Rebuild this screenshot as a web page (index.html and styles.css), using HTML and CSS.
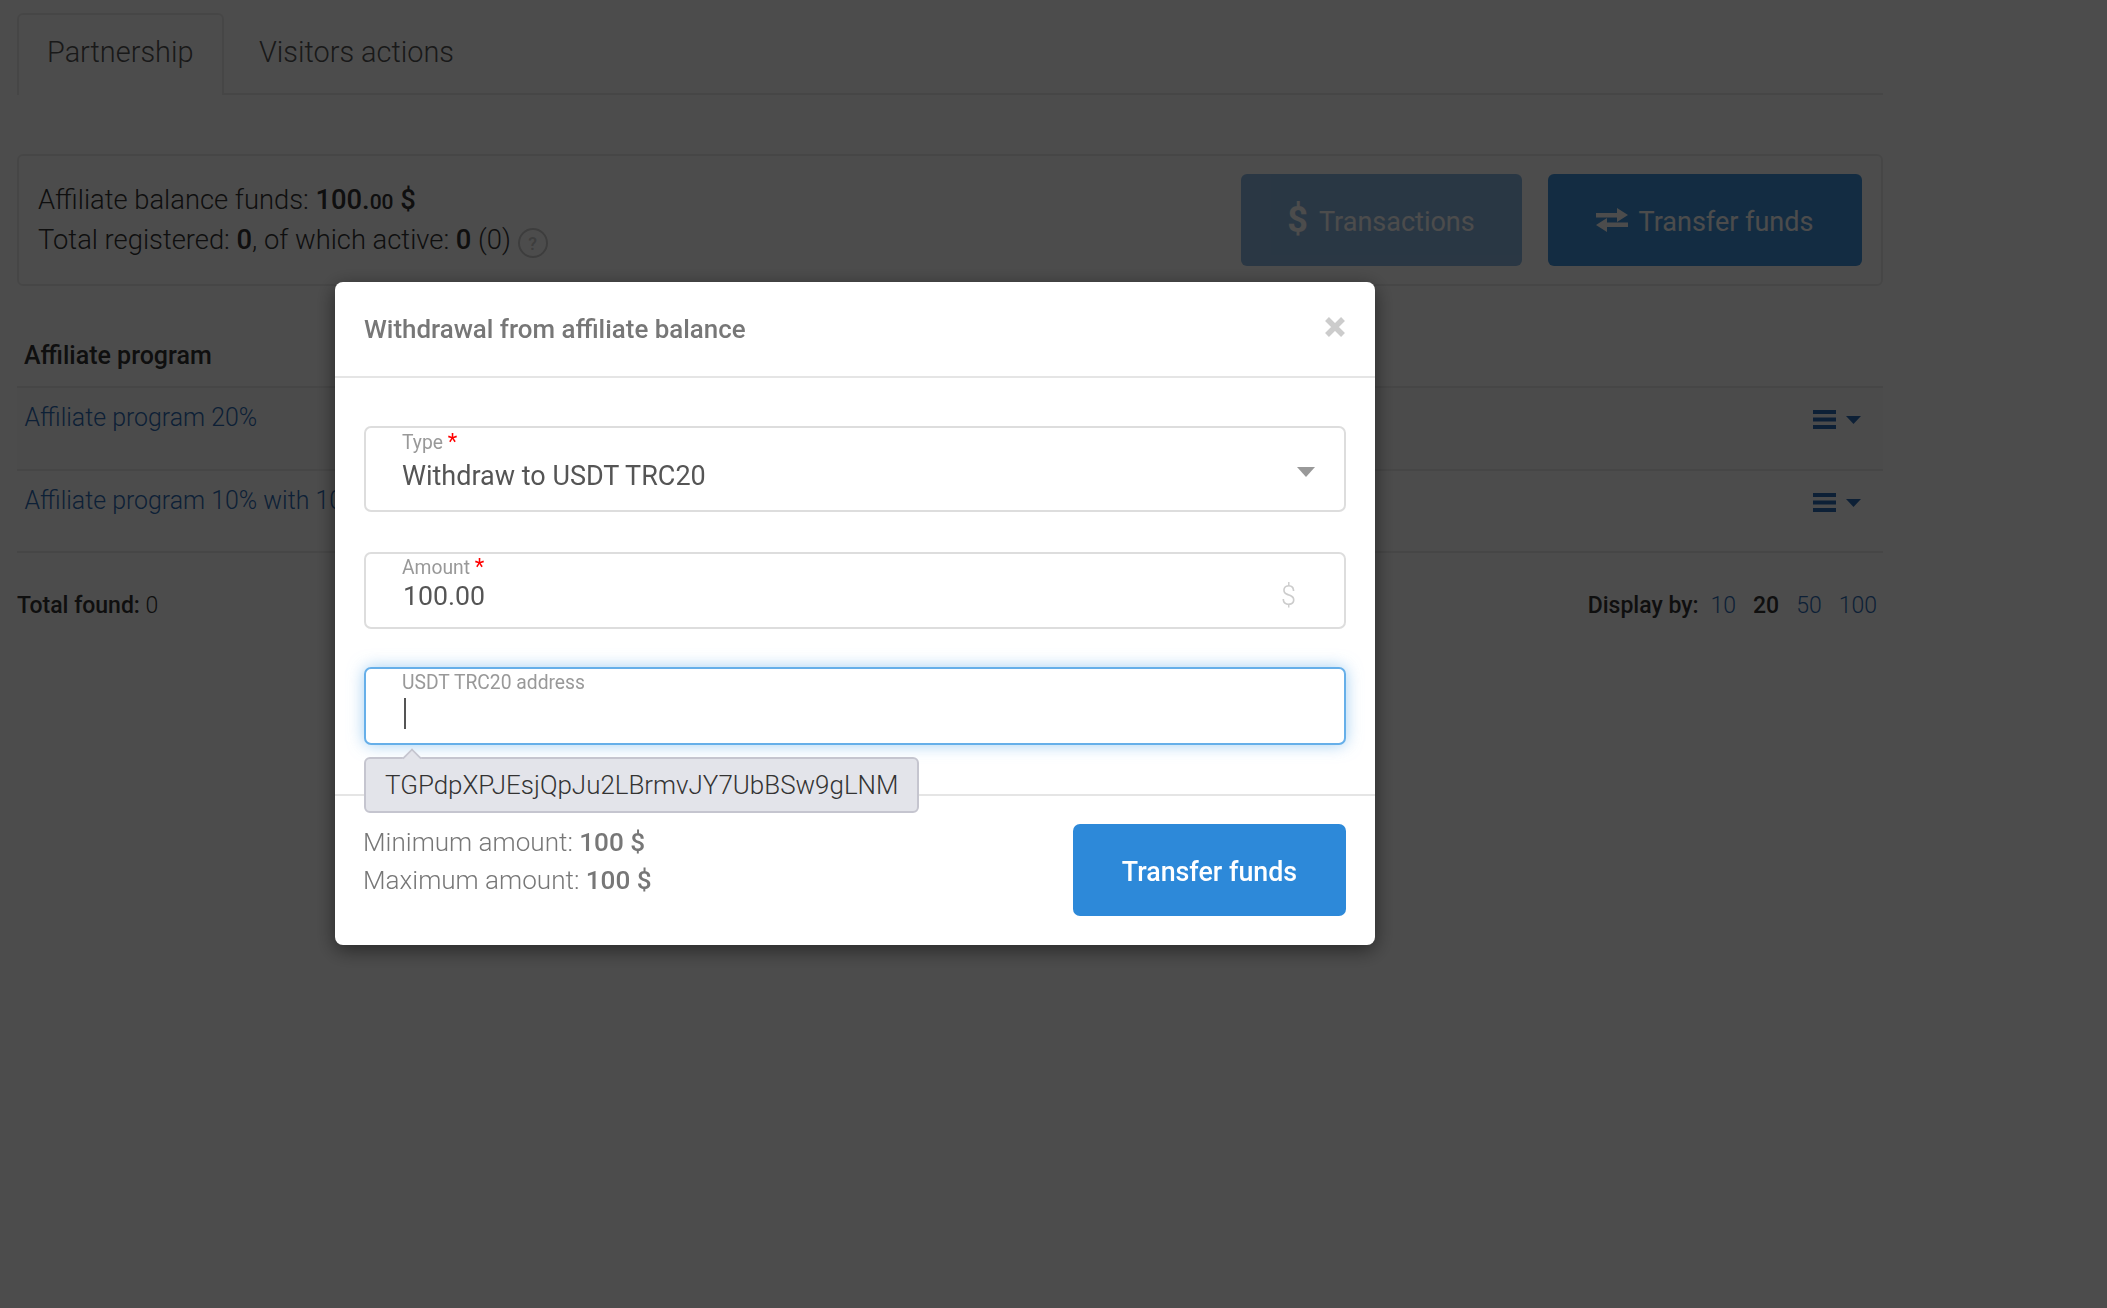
FILE: index.html
```html
<!DOCTYPE html>
<html lang="en">
<head>
<meta charset="utf-8">
<title>Withdrawal from affiliate balance</title>
<link rel="stylesheet" href="styles.css">
</head>
<body>
<div class="page">
  <nav class="tabs">
    <a class="tab tab-active">Partnership</a>
    <a class="tab">Visitors actions</a>
  </nav>
  <section class="panel">
    <div class="stats">
      <div class="stat-line">Affiliate balance funds: <b>100.<small>00</small> $</b></div>
      <div class="stat-line">Total registered: <b>0</b>, of which active: <b>0</b> (0) <span class="help">?</span></div>
    </div>
    <div class="actions">
      <a class="btn btn-muted"><span class="btn-dollar">$</span>Transactions</a>
      <a class="btn btn-primary">
        <svg class="btn-icon" viewBox="0 0 32 24" width="32" height="24"><path d="M0 5h21V0l11 7-11 7V9.500H0zM32 14.500H11V10L0 17l11 7v-5h21z" fill="currentColor"/></svg>
        Transfer funds
      </a>
    </div>
  </section>
  <div class="table">
    <div class="table-head">Affiliate program</div>
    <div class="row row-tint">
      <a class="row-link">Affiliate program 20%</a>
      <span class="row-menu">
        <svg viewBox="0 0 23 19" width="23" height="19"><path d="M0 0h23v4H0zM0 7.500h23v4H0zM0 15h23v4H0z" fill="currentColor"/></svg>
        <svg viewBox="0 0 15 8" width="15" height="8"><path d="M0 0h15L7.500 8z" fill="currentColor"/></svg>
      </span>
    </div>
    <div class="row">
      <a class="row-link">Affiliate program 10% with 10</a>
      <span class="row-menu">
        <svg viewBox="0 0 23 19" width="23" height="19"><path d="M0 0h23v4H0zM0 7.500h23v4H0zM0 15h23v4H0z" fill="currentColor"/></svg>
        <svg viewBox="0 0 15 8" width="15" height="8"><path d="M0 0h15L7.500 8z" fill="currentColor"/></svg>
      </span>
    </div>
  </div>
  <div class="summary">
    <div class="total"><b>Total found:</b> 0</div>
    <div class="pager"><b class="pager-label">Display by:</b><a>10</a><b>20</b><a>50</a><a>100</a></div>
  </div>
</div>

<div class="overlay">
  <div class="modal">
    <header class="modal-head">
      <h2 class="modal-title">Withdrawal from affiliate balance</h2>
      <svg class="modal-close" viewBox="0 0 22 22" width="22" height="22"><path d="M3 3l16 16M19 3L3 19" stroke="currentColor" stroke-width="5.500"/></svg>
    </header>
    <div class="modal-body">
      <div class="field field-select">
        <label class="field-label">Type <i>*</i></label>
        <div class="field-value">Withdraw to USDT TRC20</div>
        <svg class="field-arrow" viewBox="0 0 18 10" width="18" height="10"><path d="M0 0h18L9 10z" fill="currentColor"/></svg>
      </div>
      <div class="field field-amount">
        <label class="field-label">Amount <i>*</i></label>
        <div class="field-value">100.00</div>
        <span class="field-unit">$</span>
      </div>
      <div class="field field-focus">
        <label class="field-label">USDT TRC20 address</label>
        <div class="field-value"><span class="text-caret"></span></div>
        <div class="suggest">TGPdpXPJEsjQpJu2LBrmvJY7UbBSw9gLNM</div>
      </div>
    </div>
    <footer class="modal-foot">
      <div class="limits">
        <div>Minimum amount: <b>100 $</b></div>
        <div>Maximum amount: <b>100 $</b></div>
      </div>
      <a class="submit">Transfer funds</a>
    </footer>
  </div>
</div>
</body>
</html>
```
FILE: styles.css
```css
* { box-sizing: border-box; }
html, body { margin: 0; height: 100%; }
body {
  background: #fff;
  color: #333;
  font-family: Roboto, "Liberation Sans", sans-serif;
  font-size: 27.350px;
  font-weight: 300;
  overflow: hidden;
}
b { font-weight: 500; }
.page { width: 1883px; padding: 13px 0 0 17px; }

.tabs { display: flex; height: 82px; border-bottom: 2px solid #ececec; }
.tab { padding: 22px 30px 0; font-size: 28.900px; color: #555; height: 82px; line-height: 34px; }
.tab-active {
  width: 207px;
  border: 2px solid #ececec;
  border-bottom: 0;
  border-radius: 6px 6px 0 0;
  background: #fff;
  padding: 20px 0 0 28px;
  margin-right: 5px;
}

.panel {
  margin-top: 59px;
  height: 132px;
  border: 2px solid #ececec;
  border-radius: 6px;
  padding: 18px 19px 0 19px;
  display: flex;
  justify-content: space-between;
}
.stats { padding-top: 7px; }
.stat-line { height: 39.500px; line-height: 39.500px; }
.stats small { font-size: 21px; }
.help {
  display: inline-block;
  width: 30px;
  height: 30px;
  border: 2px solid #ccc;
  border-radius: 50%;
  text-align: center;
  line-height: 27px;
  font-size: 18px;
  font-weight: 500;
  color: #ccc;
  vertical-align: -1px;
}
.actions { display: flex; gap: 26px; }
.btn {
  height: 92px;
  border-radius: 6px;
  display: flex;
  align-items: center;
  justify-content: center;
  gap: 11px;
  color: #fff;
  font-weight: 400;
  font-size: 27px;
  line-height: 34px;
  padding-top: 4px;
  opacity: .9;
}
.btn-muted { width: 281px; background: #7fb1e0; padding-left: 1px; }
.btn-primary { width: 314px; background: #2d89d9; padding-left: 1px; }
.btn-dollar { font-size: 36px; font-weight: 700; line-height: 1; margin-left: -2px; margin-top: -5px; }
.btn-icon { margin-left: -2px; margin-top: -5px; }

.table { margin-top: 31px; }
.table-head { height: 69px; padding: 24px 0 0 7px; font-size: 25px; font-weight: 500; color: #333; line-height: 30px; }
.row {
  height: 83px;
  border-top: 2px solid #ececec;
  padding: 14px 22px 0 7.500px;
  display: flex;
  justify-content: space-between;
  align-items: flex-start;
}
.row-tint { background: #fcfcfc; }
.row:last-child { border-bottom: 2px solid #ececec; height: 84px; }
.row-link { color: #2d6bb5; font-size: 24.900px; line-height: 32px; }
.row-menu { display: flex; align-items: center; gap: 10px; color: #2d6bb5; padding-top: 8px; }

.summary { display: flex; justify-content: space-between; margin-top: 38px; font-size: 23px; line-height: 30px; padding-right: 6px; }
.total b, .pager b { font-weight: 500; }
.pager { display: flex; gap: 17px; }
.pager a { color: #2d6bb5; }
.pager-label { margin-right: -5px; }

.overlay {
  position: fixed;
  inset: 0;
  background: rgba(0, 0, 0, .7);
  padding: 282px 0 0 335px;
}
.modal {
  width: 1040px;
  height: 663px;
  background: #fff;
  border-radius: 8px;
  box-shadow: 0 5px 20px rgba(0, 0, 0, .5);
  display: flex;
  flex-direction: column;
  color: #555;
}
.modal-head {
  height: 96px;
  border-bottom: 2px solid #e5e5e5;
  padding: 0 29px;
  display: flex;
  align-items: center;
  justify-content: space-between;
}
.modal-title { margin: 0; font-size: 25.900px; font-weight: 500; color: #777; }
.modal-close { color: #ccc; margin-top: -5px; }

.modal-body { padding: 48px 29px 0; height: 416px; display: flex; flex-direction: column; }
.field {
  position: relative;
  border: 2px solid #ddd;
  border-radius: 7px;
  padding: 3px 36px 0 36px;
  background: #fff;
}
.field-select { height: 86px; margin-bottom: 40px; }
.field-amount { height: 77px; margin-bottom: 38px; padding-top: 2px; }
.field-focus { height: 78px; padding-top: 2px; border-color: #66afe9; box-shadow: 0 0 16px rgba(102, 175, 233, .6); }
.field-label { display: block; font-size: 19.300px; line-height: 24px; color: #999; font-weight: 400; }
.field-label i { color: #f00; font-style: normal; font-size: 22px; line-height: 20px; }
.field-value { font-size: 27px; line-height: 34px; font-weight: 400; color: #555; margin-top: 1px; }
.field-select .field-value { margin-top: 4px; }
.field-amount .field-value { padding-left: 1px; font-size: 26.700px; margin-top: -1px; }
.field-arrow { position: absolute; right: 29px; top: 39px; color: #999; }
.field-unit { position: absolute; right: 48px; top: 25px; color: #ccc; font-size: 27px; line-height: 34px; }
.text-caret { display: block; width: 2px; height: 31px; margin: 3px 0 0 2px; background: #555; }

.suggest {
  position: absolute;
  left: -2px;
  top: 88px;
  width: 555px;
  height: 56px;
  background: #e3e4ea;
  border: 2px solid #c5c5cf;
  border-radius: 6px;
  font-size: 25.950px;
  line-height: 52px;
  font-weight: 300;
  color: #333;
  padding-left: 19px;
  white-space: nowrap;
}
.suggest::before {
  content: "";
  position: absolute;
  left: 38px;
  top: -9px;
  width: 14px;
  height: 14px;
  background: #e3e4ea;
  border-left: 2px solid #c5c5cf;
  border-top: 2px solid #c5c5cf;
  transform: rotate(45deg) scale(.85);
}

.modal-foot {
  flex: 1;
  border-top: 2px solid #e5e5e5;
  padding: 28px 29px 0;
  display: flex;
  justify-content: space-between;
}
.limits { line-height: 37.500px; color: #777; font-size: 26.100px; margin-left: -1px; }
.limits b { color: #777; }
.submit {
  width: 273px;
  height: 92px;
  background: #2d89d9;
  border-radius: 7px;
  color: #fff;
  display: flex;
  align-items: center;
  justify-content: center;
  font-weight: 500;
  font-size: 26.800px;
  padding-top: 4px;
}
```
